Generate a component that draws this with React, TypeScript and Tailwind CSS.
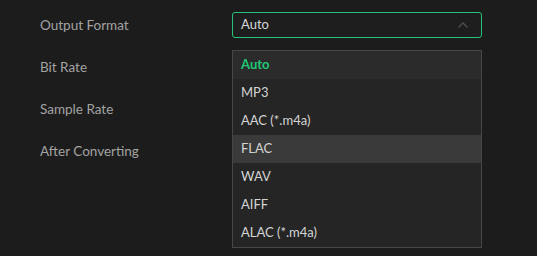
import { useState } from "react"

const formats = ["Auto", "MP3", "AAC (*.m4a)", "FLAC", "WAV", "AIFF", "ALAC (*.m4a)"]
const labels = ["Output Format", "Bit Rate", "Sample Rate", "After Converting"]

export default function App() {
  const [selected] = useState("Auto")
  const [hovered] = useState("FLAC")

  return (
    <div
      className="h-[256px] w-[537px] overflow-hidden bg-[#1c1c1c] text-[13px]"
      style={{ fontFamily: "Lato, 'Open Sans', sans-serif" }}
    >
      <div className="flex pl-10 pt-3">
        {/* Labels */}
        <div className="flex w-[192px] flex-col">
          {labels.map((label) => (
            <div key={label} className="mb-4 flex h-[26px] items-center text-[13.5px] text-[#a3a3a3]">
              {label}
            </div>
          ))}
        </div>

        {/* Select */}
        <div className="flex w-[250px] flex-col">
          <div className="flex h-[26px] items-center justify-between rounded-[3px] border border-[#25c47a] bg-[#1e1e1e] pl-2 pr-3 text-[#d6d6d6]">
            <span>{selected}</span>
            <svg width="12" height="8" viewBox="0 0 12 8" fill="none">
              <path d="M1.5 6.5 6 2l4.5 4.5" stroke="#4e4e4e" strokeWidth="1.3" />
            </svg>
          </div>
          <ul className="mt-3 border border-[#474747] bg-[#252525]">
            {formats.map((f) => (
              <li
                key={f}
                className={
                  "flex h-7 items-center pl-2 " +
                  (f === selected
                    ? "bg-[#2b2b2b] font-bold text-[#1fc877]"
                    : f === hovered
                      ? "bg-[#3a3a3a] text-[#d4d4d4]"
                      : "text-[#d4d4d4]")
                }
              >
                {f}
              </li>
            ))}
          </ul>
        </div>
      </div>
    </div>
  )
}
